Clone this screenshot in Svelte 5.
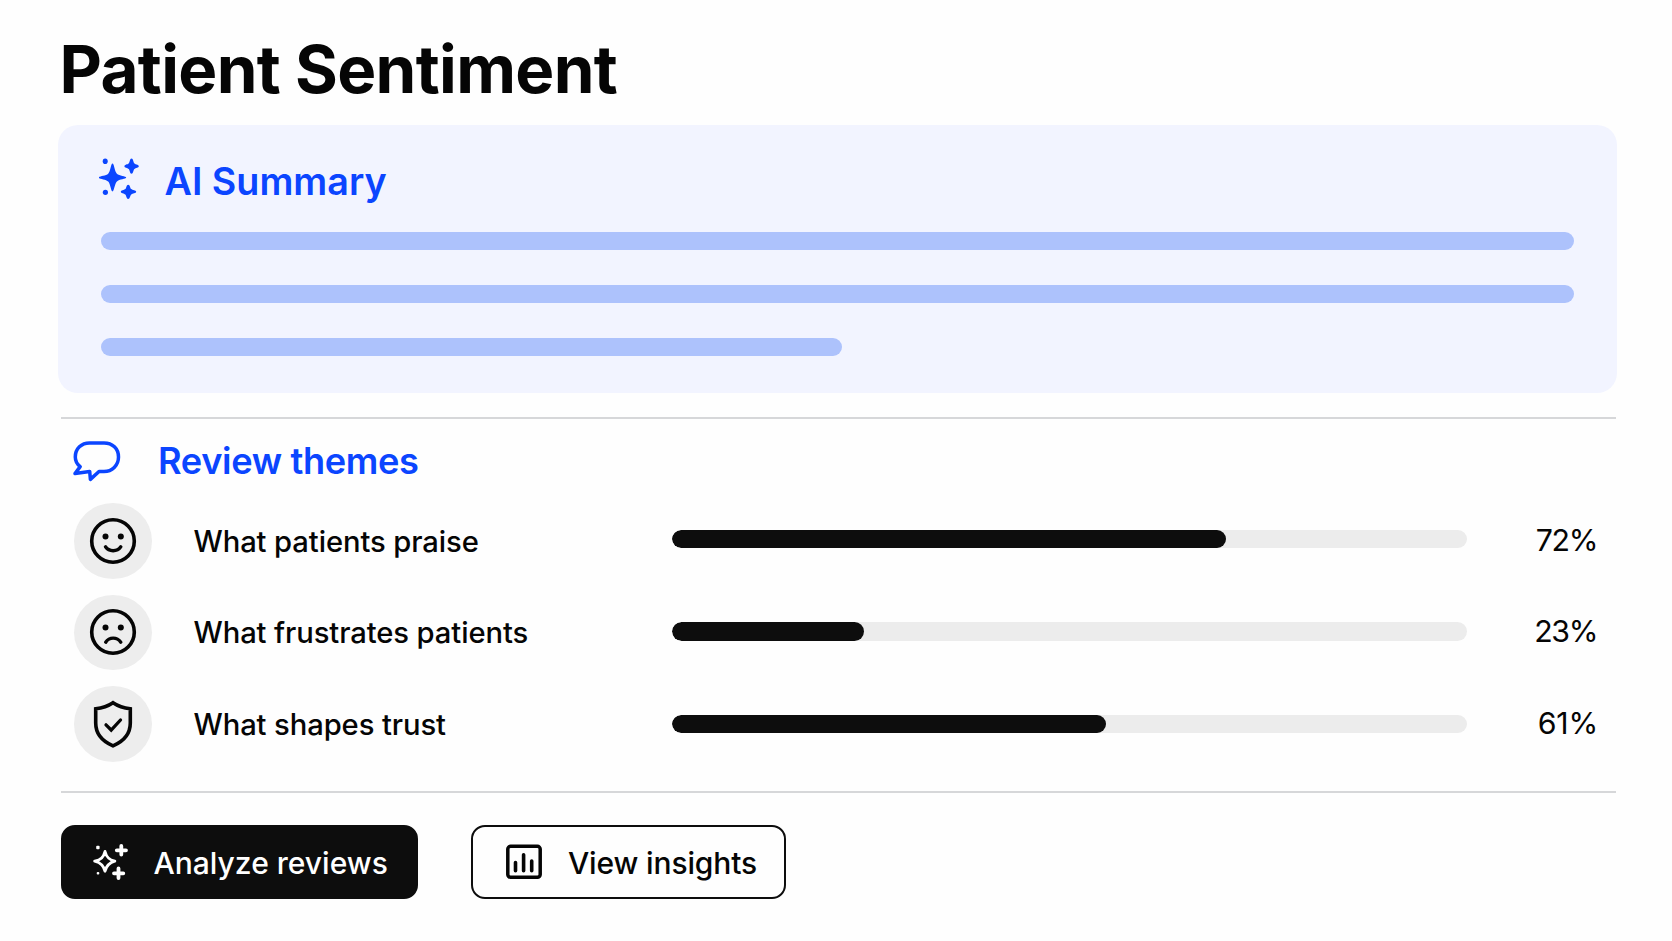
<script lang="ts">
  type Theme = {
    icon: 'smile' | 'frown' | 'shield';
    label: string;
    value: number;
    fill: number;
  };

  const themes: Theme[] = [
    { icon: 'smile', label: 'What patients praise', value: 72, fill: 69.7 },
    { icon: 'frown', label: 'What frustrates patients', value: 23, fill: 24.1 },
    { icon: 'shield', label: 'What shapes trust', value: 61, fill: 54.6 },
  ];

  const summaryLines = [100, 100, 50.3];
</script>

<main class="page">
  <h1>Patient Sentiment</h1>

  <section class="summary">
    <div class="summary-head">
      <svg width="40" height="41" viewBox="0 0 40 41" fill="currentColor" aria-hidden="true">
        <path d="M13.5 5.5C15.1 5.5 15.6 13.4 17.9 15.7C20.1 17.9 27.2 18 27.2 19.5C27.2 21 20.1 21.2 17.9 23.5C15.6 25.8 15.1 33.4 13.5 33.4C11.9 33.4 11.5 25.8 9.2 23.5C6.9 21.2 -0.2 21 -0.2 19.5C-0.2 18 6.9 17.9 9.2 15.7C11.5 13.4 11.9 5.5 13.5 5.5Z" />
        <path d="M32.5 0.6C34.3 0.6 34.2 4.3 35.4 5.5C36.6 6.6 39.8 6.5 39.8 8.2C39.8 9.9 36.6 9.8 35.4 11C34.2 12.2 34.3 15.7 32.5 15.7C30.8 15.7 30.9 12.2 29.7 11C28.5 9.8 25.4 9.9 25.4 8.2C25.4 6.5 28.5 6.6 29.7 5.5C30.9 4.3 30.8 0.6 32.5 0.6Z" />
        <path d="M29.2 26.7C31 26.7 31 30 32.2 31.1C33.4 32.2 37.2 32.1 37.2 33.8C37.2 35.5 33.4 35.4 32.2 36.6C31 37.8 31 41 29.2 41C27.4 41 27.5 37.8 26.3 36.6C25.1 35.4 21.8 35.5 21.8 33.8C21.8 32.1 25.1 32.2 26.3 31.1C27.5 30 27.4 26.7 29.2 26.7Z" />
        <ellipse cx="6.2" cy="3.3" rx="2.5" ry="2.8" />
        <circle cx="6.4" cy="34.3" r="2.6" />
      </svg>
      <h2>AI Summary</h2>
    </div>
    <div class="lines">
      {#each summaryLines as width}
        <div class="line" style="width: {width}%"></div>
      {/each}
    </div>
  </section>

  <section class="themes">
    <div class="themes-head">
      <svg width="48" height="42" viewBox="0 0 48 42" fill="none" stroke="currentColor" stroke-width="3.5" stroke-linejoin="round" aria-hidden="true">
        <path d="M16.5 2.9H31C39.5 2.9 45.5 8.7 45.5 17C45.5 25.5 39 31.5 31 31.5H26L17.4 39.4L16.7 31.5L2 33.6L7.2 26.6C3.8 24 2.3 20.8 2.3 17C2.3 8.7 8.5 2.9 16.5 2.9Z" />
      </svg>
      <h2>Review themes</h2>
    </div>

    <div class="rows">
      {#each themes as theme}
        <div class="row">
          <span class="badge">
            <svg width="48" height="48" viewBox="0 0 48 48" fill="none" stroke="currentColor" stroke-width="3.6" stroke-linecap="round" aria-hidden="true">
              {#if theme.icon === 'shield'}
                <path d="M24 2.8C29 6.2 35.5 8.2 41.3 8.8V23C41.3 34.5 33.5 41.8 24 45.8C14.5 41.8 6.7 34.5 6.7 23V8.8C12.5 8.2 19 6.2 24 2.8Z" />
                <path d="M17 24.8L22.2 30L31.5 20" stroke-width="3.3" />
              {:else}
                <circle cx="24" cy="24" r="21.3" />
                <circle cx="16.5" cy="19.6" r="3" fill="currentColor" stroke="none" />
                <circle cx="31.8" cy="19.6" r="3" fill="currentColor" stroke="none" />
                {#if theme.icon === 'smile'}
                  <path d="M16.5 29.8C20 35 28.2 35 31.8 29.8" stroke-width="3.4" />
                {:else}
                  <path d="M16.7 34.2C20.3 28.8 28 28.8 31.8 34.2" stroke-width="3.4" />
                {/if}
              {/if}
            </svg>
          </span>
          <span class="label">{theme.label}</span>
          <div class="track">
            <div class="fill" style="width: {theme.fill}%"></div>
          </div>
          <span class="value">{theme.value}%</span>
        </div>
      {/each}
    </div>
  </section>

  <footer class="actions">
    <button class="btn primary">
      <svg width="36" height="36" viewBox="0 0 36 36" fill="none" stroke="currentColor" stroke-linejoin="round" aria-hidden="true">
        <path d="M13 7.5C14.5 13.3 17 15.8 22.8 17.2C17 18.8 14.5 21.5 13 27.2C11.5 21.5 9 18.8 2.7 17.2C9 15.8 11.5 13.3 13 7.5Z" stroke-width="2.9" />
        <path d="M29.3 2V10.6M24.8 6.3H34M26.5 24.5V34M22 29.3H31.3" stroke-width="3.8" stroke-linecap="round" />
        <rect x="4.2" y="1.7" width="3.4" height="3.6" rx="1" fill="currentColor" stroke="none" />
        <rect x="4.7" y="28" width="2.6" height="2.6" rx="1" fill="currentColor" stroke="none" />
      </svg>
      <span>Analyze reviews</span>
    </button>
    <button class="btn outline">
      <svg width="36" height="36" viewBox="0 0 36 36" fill="none" stroke="currentColor" aria-hidden="true">
        <rect x="1.8" y="2.3" width="32.4" height="31" rx="2.8" stroke-width="3.5" />
        <path d="M9.5 18.5V26.8M17.6 10.8V26.8M25.7 17V26.8" stroke-width="3.6" stroke-linecap="round" />
      </svg>
      <span>View insights</span>
    </button>
  </footer>
</main>

<style>
  :global(body) {
    background: #fefefe;
  }
  .page {
    box-sizing: border-box;
    width: 1672px;
    height: 941px;
    padding: 30px 55px 0 58px;
    overflow: hidden;
    font-family: Inter, 'Liberation Sans', sans-serif;
    color: #050505;
  }
  h1,
  h2 {
    margin: 0;
    white-space: nowrap;
  }
  h1 {
    height: 95px;
    padding-left: 1.5px;
    font-size: 65.5px;
    line-height: 80px;
    font-weight: 650;
    letter-spacing: -0.65px;
  }
  h2 {
    font-weight: 560;
    color: #0b45ff;
  }
  .summary {
    box-sizing: border-box;
    height: 268px;
    padding: 31px 43.5px 0 43px;
    border-radius: 20px;
    background: #f2f4ff;
  }
  .summary-head {
    display: flex;
    align-items: center;
    gap: 26px;
    height: 44px;
    color: #0b45ff;
  }
  .summary-head svg {
    margin-left: -2.5px;
  }
  .summary h2 {
    font-size: 37.7px;
    line-height: 44px;
    padding-top: 5px;
  }
  .lines {
    display: grid;
    gap: 35px;
    margin-top: 31.5px;
  }
  .line {
    height: 18px;
    border-radius: 9px;
    background: #adc2fc;
  }
  .themes {
    height: 376px;
    margin: 24px 1px 0 3px;
    box-sizing: border-box;
    border-top: 2px solid #d6d7d9;
    border-bottom: 2px solid #d6d7d9;
  }
  .themes-head {
    display: flex;
    align-items: center;
    gap: 37px;
    height: 84px;
    padding-left: 12px;
    color: #0b45ff;
  }
  .themes-head svg {
    margin-bottom: 1px;
  }
  .themes h2 {
    font-size: 36.2px;
    line-height: 44px;
    letter-spacing: -0.35px;
  }
  .rows {
    display: grid;
    grid-auto-rows: 75.5px;
    row-gap: 16px;
  }
  .row {
    display: grid;
    grid-template-columns: 78px 480px 795px 1fr;
    align-items: center;
    padding-left: 13px;
  }
  .badge {
    display: grid;
    place-items: center;
    height: 75.5px;
    border-radius: 50%;
    background: #ededed;
  }
  .label {
    padding: 1px 0 0 41.5px;
    font-size: 29.2px;
    font-weight: 450;
    letter-spacing: -0.1px;
  }
  .row .track {
    margin: 0 0 4px 40px;
    width: 795px;
    height: 18.5px;
    border-radius: 10px;
    background: #ececec;
    overflow: hidden;
  }
  .row:nth-child(2) .track {
    margin-bottom: 2px;
  }
  .row:nth-child(3) .track {
    margin-bottom: 0;
  }
  .fill {
    height: 100%;
    border-radius: 10px;
    background: #0d0d0d;
  }
  .value {
    padding: 0 19px 2px 0;
    text-align: right;
    font-size: 30.3px;
    letter-spacing: -1.4px;
  }
  .row:nth-child(3) .value {
    letter-spacing: -0.2px;
    padding-right: 18px;
  }
  .actions {
    display: flex;
    gap: 53px;
    padding: 32px 0 0 3px;
  }
  .btn {
    box-sizing: border-box;
    display: flex;
    align-items: center;
    height: 74px;
    border: 2px solid #0d0d0d;
    border-radius: 14px;
    font: 500 30px Inter, 'Liberation Sans', sans-serif;
    white-space: nowrap;
  }
  .btn span {
    padding-top: 2px;
  }
  .primary {
    width: 357px;
    gap: 26px;
    padding: 0 0 0 28.5px;
    background: #0d0d0d;
    color: #fff;
  }
  .outline {
    width: 315px;
    gap: 26px;
    padding: 0 0 0 33px;
    background: #fefefe;
    color: #050505;
    letter-spacing: -0.15px;
  }
</style>
